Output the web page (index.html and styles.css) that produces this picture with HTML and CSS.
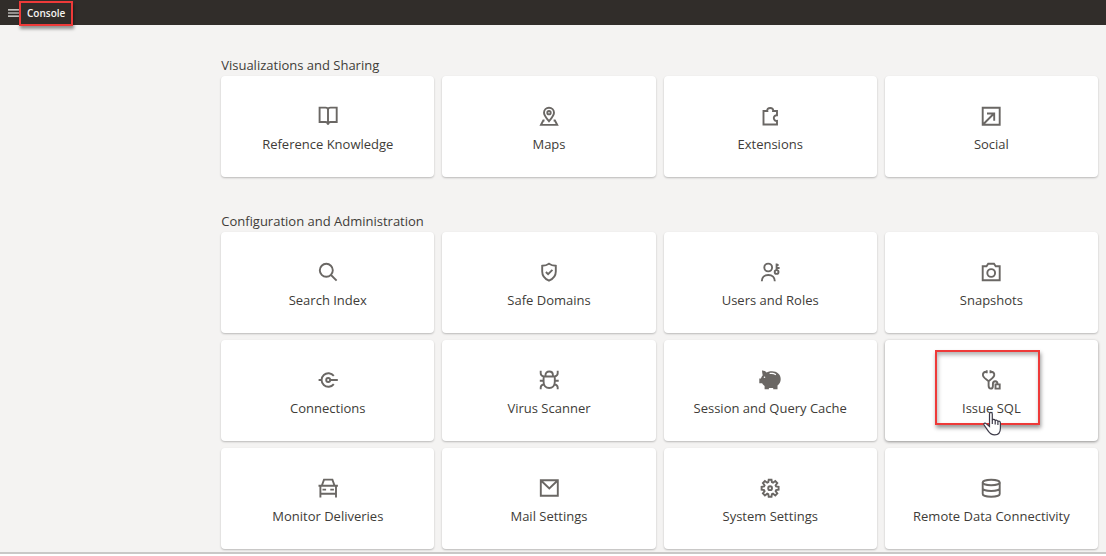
FILE: index.html
```html
<!DOCTYPE html>
<html lang="en">
<head>
<meta charset="utf-8">
<meta name="viewport" content="width=device-width, initial-scale=1">
<title>Console</title>
<link rel="stylesheet" href="styles.css">
</head>
<body>
<header class="topbar">
  <button class="menu-button" type="button" aria-label="Navigation menu">
    <svg class="menu-icon" viewBox="0 0 12 10"><path d="M0 1.500h12M0 5h12M0 8.500h12"/></svg>
  </button>
  <h1 class="page-title">Console</h1>
</header>
<main class="content">
  <section class="group">
    <h2 class="group-title">Visualizations and Sharing</h2>
    <div class="cards">
      <a class="card" href="#reference-knowledge">
        <svg class="icon" viewBox="0 0 24 24"><path d="M12 5.700C12 4.300 11 3.600 9.500 3.600H3.600V18h5.900c1.600 0 2.500.8 2.500 2.800 0-2 .9-2.800 2.500-2.800h6.200V3.600h-6.200C13 3.600 12 4.300 12 5.700v15"/></svg>
        <span>Reference Knowledge</span>
      </a>
      <a class="card" href="#maps">
        <svg class="icon" viewBox="0 0 24 24"><path d="M12 17.200c-2.800-3.300-5-5.800-5-8.500a5 5 0 0 1 10 0c0 2.700-2.200 5.200-5 8.500zM7.500 16.500H6.300l-2.300 4.400h16.200l-2.300-4.400h-1.300"/><circle cx="12" cy="8.700" r="1.700"/></svg>
        <span>Maps</span>
      </a>
      <a class="card" href="#extensions">
        <svg class="icon" viewBox="0 0 24 24"><path d="M5.500 7h3.800c-.3-1.900.9-3 2.900-3s3.200 1.100 2.900 3H19v4.300c-1.900-.2-3.200 1-3.200 2.800s1.300 3 3.200 2.800v3.600H5.500z"/></svg>
        <span>Extensions</span>
      </a>
      <a class="card" href="#social">
        <svg class="icon" viewBox="0 0 24 24"><path d="M3.700 3.800h17v17h-17zM4 20.500L14.500 10M8 9.500h7.200v7.200"/></svg>
        <span>Social</span>
      </a>
    </div>
  </section>
  <section class="group">
    <h2 class="group-title">Configuration and Administration</h2>
    <div class="cards">
      <a class="card" href="#search-index">
        <svg class="icon" viewBox="0 0 24 24"><circle cx="10.300" cy="10.300" r="6.500"/><path d="M15 15l5.600 5.600"/></svg>
        <span>Search Index</span>
      </a>
      <a class="card" href="#safe-domains">
        <svg class="icon" viewBox="0 0 24 24"><path d="M12 3.700c2.200 1.500 4.300 2 6.800 2.100v5.700c0 4.500-2.800 7.500-6.800 9.200-4-1.700-6.800-4.700-6.800-9.200V5.800c2.500-.1 4.600-.6 6.800-2.100zM8.900 12l2.200 2.200 4.300-4.300"/></svg>
        <span>Safe Domains</span>
      </a>
      <a class="card" href="#users-and-roles">
        <svg class="icon" viewBox="0 0 24 24"><circle cx="10.200" cy="7.500" r="3.900"/><path d="M3.800 21.200c0-3.700 2.500-6.200 6.500-6.200s6.500 2.500 6.500 6.200M18.600 10V3.600M18.600 5h2M18.600 8h3"/><circle cx="18.600" cy="12" r="1.900"/></svg>
        <span>Users and Roles</span>
      </a>
      <a class="card" href="#snapshots">
        <svg class="icon" viewBox="0 0 24 24"><path d="M3.700 6.300H7.500l1.700-2.500h5.800l1.700 2.500h4v14h-17z"/><circle cx="12.200" cy="13" r="3.900"/></svg>
        <span>Snapshots</span>
      </a>
      <a class="card" href="#connections">
        <svg class="icon" viewBox="0 0 24 24"><path d="M17.800 7.900a6.800 6.800 0 1 0 0 8.200M2.600 12h2.600M14.200 12h7.600"/><circle cx="12.200" cy="12" r="2"/></svg>
        <span>Connections</span>
      </a>
      <a class="card" href="#virus-scanner">
        <svg class="icon" viewBox="0 0 24 24"><path d="M6.600 8.500h11.200v5.300c0 3.600-2.300 6.200-5.600 6.200s-5.600-2.600-5.600-6.200zM8.500 8.500V7c0-2.200 1.500-3.500 3.700-3.500s3.700 1.300 3.700 3.500v1.500M3.700 2.800v2.400c0 1.700 1.100 2.700 2.900 3.300M20.700 2.800v2.400c0 1.700-1.100 2.700-2.900 3.300M2.800 12.800h3.800M17.800 12.800h3.900M3.700 21.200v-1.700c0-1.600 1.200-2.700 3.600-3.200M20.700 21.200v-1.700c0-1.600-1.200-2.700-3.600-3.200"/></svg>
        <span>Virus Scanner</span>
      </a>
      <a class="card" href="#session-and-query-cache">
        <svg class="icon icon-solid" viewBox="0 0 24 24"><path fill-rule="evenodd" d="M4 2.500c2.300 0 3.700.7 4.600 2C10.200 3.600 12 3.300 14 3.300c5 0 8.700 3.200 8.700 7.600 0 2.700-1.200 4.900-3.200 6.500v3.800h-4.300v-1.300h-4.300v1.300H6.600v-3.100c-1-.8-1.900-1.700-2.500-2.800H1.300v-4.900h1.600c.4-1.300 1-2.300 1.800-3.200C4.400 5.600 4.100 4.200 4 2.500zM6.500 8.400a.8.8 0 1 0 0 1.600.8.8 0 0 0 0-1.600zM11.500 5l.2 1.100c2.200-.4 4.100 0 5.900 1.100l.6-.9C16.200 5 14 4.600 11.500 5z"/></svg>
        <span>Session and Query Cache</span>
      </a>
      <a class="card card-active" href="#issue-sql">
        <svg class="icon" viewBox="0 0 24 24"><path d="M7.700 3.700C4.900 3.500 3.500 5.400 4 7.600c.5 2 2.500 3.300 5.600 5.500 3.100-2.200 5.100-3.500 5.600-5.500.5-2.200-.9-4.100-3.700-3.900M7.700 2.300v3M11.500 2.300v3M9.600 13v4.600c0 2 .8 3 2.200 3s2.100-1 2.100-2.700v-2c0-1.600.8-2.600 2.300-2.600s2.300 1 2.300 2.700M16.500 16.400h4.200v4.200h-4.200z"/></svg>
        <span>Issue SQL</span>
        <span class="highlight"></span>
        <svg class="cursor" viewBox="0 0 20 25"><path d="M7.500 15.500V3.200C7.500.7 10.300.7 10.300 3.200v6.200c.5-1.400 2.700-1.300 2.900.5.700-1.200 2.600-.8 2.700.8.800-1 2.500-.5 2.500 1.200v5.300c0 4.200-2.200 6.600-5.700 6.600-3.200 0-4.700-1.100-6.600-4l-4-5.800c-.8-1.400.8-2.500 2-1.400zM10.300 9v4M13.200 10v3.500M15.900 11v3"/></svg>
      </a>
      <a class="card" href="#monitor-deliveries">
        <svg class="icon" viewBox="0 0 24 24"><path d="M5.800 9.800l2.200-6.200h8.400l2.200 6.200M2.500 9.800h19.400M4.400 9.800v11.700M20 9.800v11.700M4.400 17.800H20M6.500 13.600h3.600M14.300 13.600h3.600"/></svg>
        <span>Monitor Deliveries</span>
      </a>
      <a class="card" href="#mail-settings">
        <svg class="icon" viewBox="0 0 24 24"><path d="M3.800 4.300h17v15.500h-17zM4 4.500l8.300 8 8.300-8"/></svg>
        <span>Mail Settings</span>
      </a>
      <a class="card" href="#system-settings">
        <svg class="icon" viewBox="0 0 24 24"><path d="M10.300 6.200L10.700 3.700h2.800l.4 2.500 1.100.5L17.300 5l2 2-1.700 2.300.5 1.100 2.500.4v2.800l-2.500.4-.5 1.100 1.700 2.300-2 2-2.300-1.700-1.100.5-.4 2.500h-2.800l-.4-2.500-1.100-.5-2.300 1.700-2-2 1.700-2.300-.5-1.100-2.500-.4v-2.800l2.500-.4.5-1.100L4.900 7l2-2 2.300 1.700z"/><circle cx="12.100" cy="12.200" r="1.900"/></svg>
        <span>System Settings</span>
      </a>
      <a class="card" href="#remote-data-connectivity">
        <svg class="icon" viewBox="0 0 24 24"><ellipse cx="12.200" cy="6.500" rx="8.500" ry="2.700"/><path d="M3.700 6.500v11.500c0 1.600 3.800 2.800 8.500 2.800s8.500-1.200 8.500-2.800V6.500M3.700 12.200c0 1.600 3.800 2.800 8.500 2.800s8.500-1.200 8.500-2.800"/></svg>
        <span>Remote Data Connectivity</span>
      </a>
    </div>
  </section>
</main>
</body>
</html>
```
FILE: styles.css
```css
* {
  box-sizing: border-box;
}

body {
  margin: 0;
  background: #fff;
  color: #403c38;
  font-family: "Open Sans", "Noto Sans", sans-serif;
  font-size: 13px;
  line-height: 20px;
}

.topbar {
  display: flex;
  align-items: center;
  height: 25px;
  padding-left: 8px;
  background: #312d2a;
}

.menu-button {
  display: flex;
  padding: 0;
  border: 0;
  background: none;
}

.menu-icon {
  width: 11px;
  height: 10px;
  stroke: #f5f3f1;
  stroke-width: 1.3;
}

.page-title {
  height: 25px;
  margin: 1px 0 0;
  padding: 0 6px;
  border: 2px solid #ee3a39;
  box-shadow: 1px 3px 3px rgba(0, 0, 0, 0.4);
  color: #f5f3f1;
  font-size: 10px;
  font-weight: 600;
  line-height: 20px;
}

.content {
  display: flex;
  flex-direction: column;
  gap: 34px;
  padding: 30px 8px 3px 20%;
  border-bottom: 2px solid #c9c8c7;
  background: #f4f3f2;
}

.group-title {
  margin: 0 0 1px;
  font-size: 13px;
  font-weight: 400;
  line-height: 20px;
}

.cards {
  display: grid;
  grid-template-columns: repeat(4, 1fr);
  gap: 7px 8px;
}

.card {
  position: relative;
  display: flex;
  flex-direction: column;
  align-items: center;
  gap: 6px;
  padding: 28px 8px 23px;
  border-radius: 4px;
  background: #fff;
  box-shadow: 0 1px 2px rgba(0, 0, 0, 0.24);
  color: inherit;
  text-decoration: none;
}

.card-active {
  box-shadow: 0 1px 3px rgba(0, 0, 0, 0.4);
}

.icon {
  width: 24px;
  height: 24px;
  fill: none;
  stroke: #6a6764;
  stroke-width: 1.9;
}

.icon-solid {
  fill: #6a6764;
  stroke: none;
}

.highlight {
  position: absolute;
  top: 10px;
  left: calc(50% - 56px);
  width: 105px;
  height: 75px;
  border: 2px solid #ee3a39;
  box-shadow: 1px 3px 4px rgba(0, 0, 0, 0.4), inset 1px 3px 4px rgba(0, 0, 0, 0.3);
}

.cursor {
  position: absolute;
  top: 71px;
  left: calc(50% - 9px);
  width: 20px;
  height: 25px;
  fill: #fff;
  stroke: #3c3a48;
  stroke-width: 1.2;
}
```
